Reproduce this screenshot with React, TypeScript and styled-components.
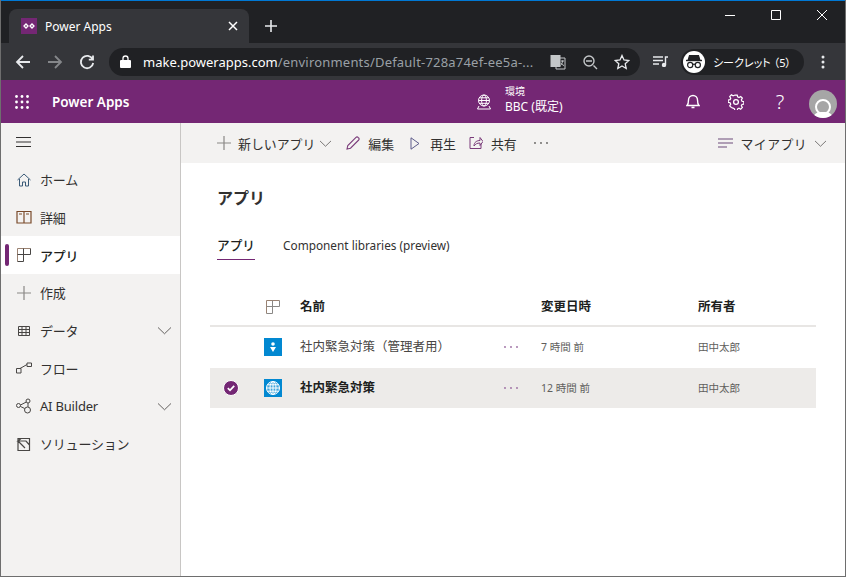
import React from "react";
import styled, { createGlobalStyle } from "styled-components";

const sans = `"Noto Sans", "Noto Sans CJK JP", sans-serif`;
const purple = "#742774";

const GlobalStyle = createGlobalStyle`
    html, body {
        margin: 0;
        padding: 0;
        background: #fff;
    }
    body {
        font-family: ${sans};
        color: #323130;
    }
`;

const Page = styled.div`
    width: 846px;
    height: 577px;
    box-sizing: border-box;
    border-left: 1px solid #6e6e6e;
    border-right: 1px solid #6e6e6e;
    border-bottom: 1px solid #6e6e6e;
    display: flex;
    flex-direction: column;
    overflow: hidden;
`;

const Glyph = styled.svg<{ $color?: string }>`
    display: block;
    flex: none;
    fill: none;
    stroke: currentColor;
    color: ${(p) => p.$color || "inherit"};
`;

/* browser chrome */
const TabStrip = styled.div`
    height: 42px;
    border-top: 1px solid #0078d4;
    background: #202124;
    display: flex;
    align-items: flex-end;
    padding-left: 9px;
    margin-left: -1px;
    margin-right: -1px;
`;

const Tab = styled.div`
    width: 240px;
    height: 34px;
    box-sizing: border-box;
    padding: 0 11px 0 12px;
    background: #35363a;
    border-radius: 8px 8px 0 0;
    display: flex;
    align-items: center;
    color: #fff;
    font-size: 12px;
`;

const TabTitle = styled.span`
    margin-left: 8px;
    flex: 1;
`;

const NewTab = styled.div`
    margin-left: 16px;
    height: 34px;
    display: flex;
    align-items: center;
`;

const WindowControls = styled.div`
    margin-left: auto;
    padding-right: 1px;
    height: 42px;
    align-self: flex-start;
    display: flex;
    color: #fff;
`;

const WindowButton = styled.div`
    width: 46px;
    height: 28px;
    display: flex;
    align-items: center;
    justify-content: center;
`;

const Toolbar = styled.div`
    height: 37px;
    background: #35363a;
    display: flex;
    align-items: center;
    padding-left: 14px;
    color: #fff;
`;

const NavButton = styled.div<{ $width?: number }>`
    width: ${(p) => p.$width ?? 32}px;
    height: 28px;
    display: flex;
    align-items: center;
`;

const Omnibox = styled.div`
    width: 531px;
    height: 28px;
    box-sizing: border-box;
    padding: 0 10px 0 11px;
    border-radius: 14px;
    background: #202124;
    display: flex;
    align-items: center;
`;

const Url = styled.div`
    margin-left: 12px;
    width: 396px;
    font-size: 13px;
    white-space: nowrap;
    color: #9aa0a6;
    letter-spacing: 0.2px;
    b {
        font-weight: 400;
        color: #fff;
        letter-spacing: 0;
    }
`;

const OmniIcons = styled.div`
    margin-left: auto;
    display: flex;
    gap: 16px;
    color: #c4c7c9;
`;

const MediaButton = styled.div`
    margin-left: 13px;
    width: 28px;
    color: #e8eaed;
`;

const ProfilePill = styled.div`
    width: 123px;
    height: 26px;
    box-sizing: border-box;
    padding-left: 2px;
    border-radius: 13px;
    background: #202124;
    display: flex;
    align-items: center;
    font-size: 11px;
    font-feature-settings: "palt";
    white-space: nowrap;
`;

const ProfileBadge = styled.div`
    width: 22px;
    height: 22px;
    border-radius: 50%;
    background: #fff;
    margin-right: 8px;
    display: flex;
    align-items: center;
    justify-content: center;
`;

const ProfileCount = styled.span`
    margin-left: 3px;
`;

const MoreButton = styled.div`
    margin-left: 17px;
`;

/* app header */
const AppHeader = styled.div`
    height: 43px;
    background: ${purple};
    color: #fff;
    display: flex;
    align-items: center;
    padding-left: 14px;
`;

const Brand = styled.div`
    margin-left: 23px;
    width: 424px;
    font-size: 13.5px;
    font-weight: 600;
`;

const Environment = styled.div`
    display: flex;
    align-items: center;
    gap: 13px;
    width: 210px;
`;

const EnvText = styled.div`
    display: flex;
    flex-direction: column;
    margin-top: -3px;
`;

const EnvLabel = styled.span`
    font-size: 10px;
    line-height: 13px;
`;

const EnvName = styled.span`
    font-size: 12px;
    line-height: 17px;
`;

const HeaderIcons = styled.div`
    display: flex;
    align-items: center;
    gap: 28px;
`;

const HelpMark = styled.span`
    width: 16px;
    text-align: center;
    font-size: 20px;
    line-height: 20px;
    font-weight: 300;
`;

const Avatar = styled.div`
    margin-left: auto;
    margin-right: 8px;
    margin-top: 4px;
    width: 28px;
    height: 28px;
    border-radius: 50%;
    background: #a6a6a6;
    overflow: hidden;
`;

/* body */
const Body = styled.div`
    flex: 1;
    display: flex;
    min-height: 0;
`;

const Sidebar = styled.nav`
    width: 180px;
    flex: none;
    box-sizing: border-box;
    background: #f3f2f1;
    border-right: 1px solid #c8c6c4;
`;

const NavItem = styled.div<{ $active?: boolean }>`
    position: relative;
    height: 37.75px;
    box-sizing: border-box;
    padding: 0 9px 0 15px;
    display: flex;
    align-items: center;
    font-size: 13px;
    white-space: nowrap;
    background: ${(p) => (p.$active ? "#fff" : "transparent")};
    color: ${(p) => (p.$active ? "#201f1e" : "#323130")};
    font-weight: ${(p) => (p.$active ? 500 : 400)};
`;

const ActiveMark = styled.span`
    position: absolute;
    left: 4px;
    top: 8px;
    width: 4px;
    height: 22px;
    border-radius: 2px;
    background: ${purple};
`;

const NavIconSlot = styled.span`
    width: 16px;
    flex: none;
    display: flex;
    justify-content: center;
`;

const NavLabel = styled.span`
    margin-left: 8px;
    flex: 1;
    letter-spacing: -0.2px;
`;

const Main = styled.main`
    flex: 1;
    min-width: 0;
    display: flex;
    flex-direction: column;
`;

const CommandBar = styled.div`
    height: 40px;
    flex: none;
    background: #f3f2f1;
    box-sizing: border-box;
    padding: 0 19px 0 36px;
    display: flex;
    align-items: center;
    font-size: 12.9px;
    color: #323130;
    white-space: nowrap;
`;

const Command = styled.div<{ $after?: number; $gap?: number }>`
    display: flex;
    align-items: center;
    gap: ${(p) => p.$gap ?? 8}px;
    margin-right: ${(p) => p.$after ?? 14}px;
`;

const ViewCommand = styled(Command)`
    margin-right: 0;
    letter-spacing: 0.4px;
`;

const Spacer = styled.div`
    flex: 1;
`;

const Content = styled.div`
    flex: 1;
    padding: 24px 29px 0 29px;
`;

const Title = styled.h1`
    margin: 0 0 0 7px;
    font-size: 16px;
    line-height: 22px;
    font-weight: 600;
    color: #323130;
`;

const Tabs = styled.div`
    margin: 23px 0 0 7px;
    display: flex;
    gap: 28px;
`;

const PageTab = styled.div<{ $active?: boolean }>`
    height: 28px;
    box-sizing: border-box;
    padding-top: 3px;
    font-size: ${(p) => (p.$active ? 12.7 : 11.8)}px;
    line-height: 20px;
    color: ${(p) => (p.$active ? "#201f1e" : "#323130")};
    font-weight: ${(p) => (p.$active ? 500 : 400)};
    border-bottom: ${(p) => (p.$active ? `1px solid ${purple}` : "none")};
`;

const Table = styled.div`
    margin-top: 27px;
    width: 606px;
`;

const rowColumns = "42px 48px 204px 37px 157px 1fr";

const HeadRow = styled.div`
    height: 36px;
    padding-top: 2px;
    border-bottom: 2px solid #e8e6e4;
    display: grid;
    grid-template-columns: ${rowColumns};
    align-items: center;
    font-size: 12.5px;
    line-height: 36px;
    font-weight: 600;
    color: #201f1e;
`;

const HeadIcon = styled.div`
    grid-column: 2;
    padding-left: 14px;
`;

const Row = styled.div<{ $selected?: boolean }>`
    height: 40px;
    margin-bottom: 1px;
    display: grid;
    grid-template-columns: ${rowColumns};
    align-items: center;
    font-size: 12.5px;
    line-height: 38px;
    background: ${(p) => (p.$selected ? "#edebe9" : "#fff")};
    color: #323130;
`;

const CheckCell = styled.div`
    display: flex;
    justify-content: center;
`;

const AppTile = styled.div`
    width: 18px;
    height: 18px;
    margin-left: 12px;
    background: #0288d1;
    display: flex;
    align-items: center;
    justify-content: center;
`;

const AppName = styled.div<{ $bold?: boolean }>`
    font-weight: ${(p) => (p.$bold ? 600 : 400)};
    color: ${(p) => (p.$bold ? "#201f1e" : "#484644")};
    white-space: nowrap;
`;

const RowDots = styled.div`
    color: #9a6aa0;
`;

const Meta = styled.div`
    font-size: 10.5px;
    color: #605e5c;
    white-space: nowrap;
`;

/* icons */
const Chevron = ({ size = 12 }: { size?: number }) => (
    <Glyph width={size} height={size} viewBox="0 0 12 12" strokeWidth="0.9" $color="#605e5c">
        <path d="M0 3.2 6 9l6-5.8" />
    </Glyph>
);

const TightChevron = styled.span`
    margin-left: -2px;
`;

const Dots = ({ color }: { color?: string }) => (
    <Glyph width="14" height="4" viewBox="0 0 14 4" $color={color}>
        <g fill="currentColor" stroke="none">
            <circle cx="1" cy="2" r="0.9" />
            <circle cx="7" cy="2" r="0.9" />
            <circle cx="13" cy="2" r="0.9" />
        </g>
    </Glyph>
);

const GridMark = ({ color = "#605e5c", accent = "#9a8272" }: { color?: string; accent?: string }) => (
    <Glyph width="14" height="14" viewBox="0 0 14 14" strokeWidth="1" $color={color}>
        <path d="M.5 13.500V.5h13" stroke={accent} />
        <path d="M.5 13.500h6V.5M.5 6.500h13V.5" />
    </Glyph>
);

const AppsMenu = () => (
    <Glyph width="14" height="14" viewBox="0 0 14 14">
        <g fill="#fff" stroke="none">
            {[1.5, 7, 12.5].flatMap((y) =>
                [1.5, 7, 12.5].map((x) => <circle key={`${x}-${y}`} cx={x} cy={y} r="1.4" />)
            )}
        </g>
    </Glyph>
);

const Line = ({ d, w = 16, h = 16, sw = 1, vb, color }: { d: string; w?: number; h?: number; sw?: number; vb?: string; color?: string }) => (
    <Glyph width={w} height={h} viewBox={vb || `0 0 ${w} ${h}`} strokeWidth={sw} $color={color}>
        <path d={d} />
    </Glyph>
);

const PlusIcon = ({ color = "#8a8886" }: { color?: string }) => (
    <Line w={14} h={14} color={color} sw={1.2} d="M7 0v14M0 7h14" />
);

const GlobeBuilding = () => (
    <Glyph width="16" height="16" viewBox="0 0 16 16" strokeWidth="1">
        <circle cx="8" cy="6.5" r="5.5" />
        <ellipse cx="8" cy="6.5" rx="2.4" ry="5.5" />
        <path d="M2.5 6.5h11M3.300 3.800h9.400M3.300 9.300h9.400M3 12l-1.500 3h13L13 12" />
    </Glyph>
);

const IncognitoIcon = () => (
    <Glyph width="18" height="16" viewBox="0 0 18 16" $color="#202124" strokeWidth="1.2">
        <path d="M4.500 1.500h9l1.300 4.500H3.200z" fill="#202124" />
        <path d="M1 6.500h16" strokeWidth="1.4" />
        <circle cx="5.200" cy="11" r="2.600" />
        <circle cx="12.800" cy="11" r="2.600" />
        <path d="M7.800 10.600c.8-.5 1.600-.5 2.400 0" />
    </Glyph>
);

const GearIcon = () => (
    <Glyph width="16" height="16" viewBox="0 0 16 16" strokeWidth="1.3">
        <circle cx="8" cy="8" r="2.400" />
        <path d="M6.700.8h2.600l.4 2 1.500.7 1.800-1.100 1.800 1.800-1.100 1.800.7 1.500 2 .4v2.600l-2 .4-.7 1.500 1.100 1.800-1.800 1.800-1.800-1.100-1.500.7-.4 2H6.700l-.4-2-1.500-.7L3 14.200l-1.800-1.800 1.100-1.800-.7-1.500-2-.4V6.100l2-.4.7-1.500L1.200 2.400 3 .6l1.800 1.100 1.500-.7z" transform="translate(.6 .3) scale(.93)" />
    </Glyph>
);

const ProfileFigure = () => (
    <Glyph width="28" height="28" viewBox="0 0 28 28" $color="#fff">
        <circle cx="14" cy="17" r="7" strokeWidth="2" />
        <path d="M3 29c2-6 6-7 11-7s9 1 11 7z" fill="#fff" stroke="none" />
    </Glyph>
);

const navItems = [
    { label: "ホーム", icon: <Line d="M1.500 8 8 2l6.500 6M3.500 7v7h3v-4h3v4h3V7" color="#3b5b78" /> },
    { label: "詳細", icon: <Line d="M1 2.500h6.500c.3 0 .5.3.5.6V14H1zM15 2.500H8.500c-.3 0-.5.3-.5.6V14h7zM3 5h3M10 5h3" color="#7a4a2a" sw={1.2} /> },
    { label: "アプリ", active: true, icon: <GridMark color="#484644" /> },
    { label: "作成", icon: <PlusIcon /> },
    { label: "データ", chevron: true, icon: <Line w={12} h={12} d="M.5 1.500h11v9H.5zM.5 4.500h11M.5 7.500h11M4 1.500v9M8 1.500v9" color="#484644" /> },
    { label: "フロー", icon: <Line d="M.5 8.500h4.500v4.500H.5zM11 3h4.500v3.500H11zM4 8.500 11 4.500" color="#484644" /> },
    { label: "AI Builder", chevron: true, icon: <Glyph width="16" height="16" viewBox="0 0 16 16" $color="#484644" strokeWidth="1"><circle cx="2.500" cy="7.500" r="2" /><circle cx="12" cy="3" r="2" /><circle cx="11.500" cy="12" r="3" /><path d="M4.500 7 10.300 4M4.500 8.500l4.200 2M12 5v4" /></Glyph> },
    { label: "ソリューション", icon: <Line d="M2 2.500h11.500v12H2zM2 5l7 7M5 2.500 2 5h8l3.500 4" color="#484644" sw={1.2} /> },
];

function App() {
    return (
        <Page>
            <GlobalStyle />
            <TabStrip>
                <Tab>
                    <Glyph width="16" height="16" viewBox="0 0 16 16">
                        <rect width="16" height="16" fill={purple} stroke="none" />
                        <path d="M3 8l2-2 2 2-2 2zM9 8l2-2 2 2-2 2z" fill="none" stroke="#fff" strokeWidth="1.3" />
                    </Glyph>
                    <TabTitle>Power Apps</TabTitle>
                    <Line w={10} h={10} sw={1.5} d="M1 1l8 8M9 1 1 9" />
                </Tab>
                <NewTab>
                    <Line w={12} h={12} sw={1.6} color="#e8eaed" d="M6 0v12M0 6h12" />
                </NewTab>
                <WindowControls>
                    <WindowButton><Line w={10} h={10} d="M0 5.500h10" /></WindowButton>
                    <WindowButton><Line w={10} h={10} d="M.5.5h9v9h-9z" /></WindowButton>
                    <WindowButton><Line w={10} h={10} d="M0 0l10 10M10 0 0 10" /></WindowButton>
                </WindowControls>
            </TabStrip>
            <Toolbar>
                <NavButton><Line w={16} h={16} sw={1.8} color="#e8eaed" d="M15 8H2M8 2 2 8l6 6" /></NavButton>
                <NavButton><Line w={16} h={16} sw={1.8} color="#85878a" d="M1 8h13M8 2l6 6-6 6" /></NavButton>
                <NavButton $width={30}><Line w={16} h={16} sw={1.8} color="#e8eaed" d="M13.600 5.200A6.200 6.200 0 1 0 14.200 9M14 1.500v4.200H9.800" /></NavButton>
                <Omnibox>
                    <Glyph width="11" height="13" viewBox="0 0 11 13">
                        <rect y="5" width="11" height="8" rx="1" fill="#fff" stroke="none" />
                        <path d="M3 5.500V3.500a2.500 2.500 0 0 1 5 0v2" fill="none" stroke="#fff" strokeWidth="1.3" />
                    </Glyph>
                    <Url><b>make.powerapps.com</b>/environments/Default-728a74ef-ee5a-...</Url>
                    <OmniIcons>
                        <Glyph width="16" height="16" viewBox="0 0 16 16" strokeWidth="1">
                            <rect x="1" y="1.500" width="9" height="11" fill="#c4c7c9" />
                            <path d="M10 4h5v11H6v-2.500" />
                            <path d="M11 7h3M12.500 6.500c0 2.500-.8 4-2 5M11 9c.5 1 1.500 2 3 2.500" />
                        </Glyph>
                        <Line w={16} h={16} sw={1.4} d="M11.500 11.500 15 15M4 7h6M12 7A5 5 0 1 1 2 7a5 5 0 0 1 10 0" />
                        <Line w={16} h={16} sw={1.3} color="#e8eaed" d="M8 1.500 10 6l4.800.5-3.600 3.200 1 4.800L8 12l-4.200 2.500 1-4.800L1.200 6.500 6 6z" />
                    </OmniIcons>
                </Omnibox>
                <MediaButton>
                    <Glyph width="16" height="11" viewBox="0 0 16 11" strokeWidth="1.4">
                        <path d="M0 1h10M0 4.500h10M0 8h6M12.500 9V1h2.500" />
                        <circle cx="11" cy="9" r="1.500" fill="currentColor" />
                    </Glyph>
                </MediaButton>
                <ProfilePill>
                    <ProfileBadge><IncognitoIcon /></ProfileBadge>
                    シークレット<ProfileCount>（5）</ProfileCount>
                </ProfilePill>
                <MoreButton>
                    <Glyph width="4" height="14" viewBox="0 0 4 14">
                        <g fill="#e8eaed" stroke="none">
                            <circle cx="2" cy="2" r="1.500" />
                            <circle cx="2" cy="7" r="1.500" />
                            <circle cx="2" cy="12" r="1.500" />
                        </g>
                    </Glyph>
                </MoreButton>
            </Toolbar>
            <AppHeader>
                <AppsMenu />
                <Brand>Power Apps</Brand>
                <Environment>
                    <GlobeBuilding />
                    <EnvText>
                        <EnvLabel>環境</EnvLabel>
                        <EnvName>BBC (既定)</EnvName>
                    </EnvText>
                </Environment>
                <HeaderIcons>
                    <Line w={14} h={15} sw={1.4} d="M1 11.500c1.500-1.500 1.500-3 1.500-5.500a4.500 4.500 0 0 1 9 0c0 2.500 0 4 1.500 5.500zM5.500 13.500h3" />
                    <GearIcon />
                    <HelpMark>?</HelpMark>
                </HeaderIcons>
                <Avatar><ProfileFigure /></Avatar>
            </AppHeader>
            <Body>
                <Sidebar>
                    <NavItem>
                        <Line w={15} h={12} sw={1} color="#323130" d="M0 1.500h15M0 6h15M0 10.500h15" />
                    </NavItem>
                    {navItems.map((item) => (
                        <NavItem key={item.label} $active={item.active}>
                            {item.active && <ActiveMark />}
                            <NavIconSlot>{item.icon}</NavIconSlot>
                            <NavLabel>{item.label}</NavLabel>
                            {item.chevron && <Chevron size={13} />}
                        </NavItem>
                    ))}
                </Sidebar>
                <Main>
                    <CommandBar>
                        <Command $gap={7} $after={15}>
                            <PlusIcon />
                            新しいアプリ
                            <TightChevron><Chevron size={11} /></TightChevron>
                        </Command>
                        <Command>
                            <Line w={14} h={14} sw={1.1} color="#7a3b7a" d="M1 13l.8-3.500L10 1.300c.6-.6 1.500-.6 2 0l.7.7c.6.6.6 1.500 0 2L4.500 12.200z" />
                            編集
                        </Command>
                        <Command $after={13}>
                            <Line w={14} h={13} sw={1} vb="-2.500 0 14 13" color="#5c5b8a" d="M.5.800 8.500 6.500l-8 5.700z" />
                            再生
                        </Command>
                        <Command $after={17}>
                            <Line w={14} h={14} sw={1} color="#7a3b7a" d="M5 1.500H1v11h11V8M5 10c0-4 3-5.500 6-5.500V1.500l3 4-3 4V7c-3 0-4.500 1-6 3z" />
                            共有
                        </Command>
                        <Dots color="#605e5c" />
                        <Spacer />
                        <ViewCommand>
                            <Line w={15} h={10} sw={1.1} color="#6d4a7a" d="M0 1h15M0 5h15M0 9h9" />
                            マイアプリ
                            <Chevron size={11} />
                        </ViewCommand>
                    </CommandBar>
                    <Content>
                        <Title>アプリ</Title>
                        <Tabs>
                            <PageTab $active>アプリ</PageTab>
                            <PageTab>Component libraries (preview)</PageTab>
                        </Tabs>
                        <Table>
                            <HeadRow>
                                <HeadIcon><GridMark color="#8a8886" /></HeadIcon>
                                <span>名前</span>
                                <span />
                                <span>変更日時</span>
                                <span>所有者</span>
                            </HeadRow>
                            <Row>
                                <span />
                                <AppTile>
                                    <Glyph width="8" height="10" viewBox="0 0 8 10">
                                        <g fill="#fff" stroke="none">
                                            <circle cx="4" cy="2" r="1.800" />
                                            <path d="M1 5h6L4 10z" />
                                        </g>
                                    </Glyph>
                                </AppTile>
                                <AppName>社内緊急対策（管理者用）</AppName>
                                <RowDots><Dots /></RowDots>
                                <Meta>7 時間 前</Meta>
                                <Meta>田中太郎</Meta>
                            </Row>
                            <Row $selected>
                                <CheckCell>
                                    <Glyph width="16" height="16" viewBox="0 0 16 16">
                                        <circle cx="8" cy="8" r="7.500" fill={purple} stroke="#fff" strokeWidth="1" />
                                        <path d="M4.800 8.200 7 10.300l4.200-4.400" stroke="#fff" strokeWidth="1.800" />
                                    </Glyph>
                                </CheckCell>
                                <AppTile>
                                    <Glyph width="14" height="14" viewBox="0 0 14 14" $color="#fff" strokeWidth="1">
                                        <circle cx="7" cy="7" r="6.500" fill="#fff" fillOpacity="0.25" />
                                        <ellipse cx="7" cy="7" rx="3" ry="6.500" />
                                        <path d="M.5 7h13M1.500 3.800h11M1.500 10.200h11M7 .5v13" />
                                    </Glyph>
                                </AppTile>
                                <AppName $bold>社内緊急対策</AppName>
                                <RowDots><Dots /></RowDots>
                                <Meta>12 時間 前</Meta>
                                <Meta>田中太郎</Meta>
                            </Row>
                        </Table>
                    </Content>
                </Main>
            </Body>
        </Page>
    );
}

export default App;
